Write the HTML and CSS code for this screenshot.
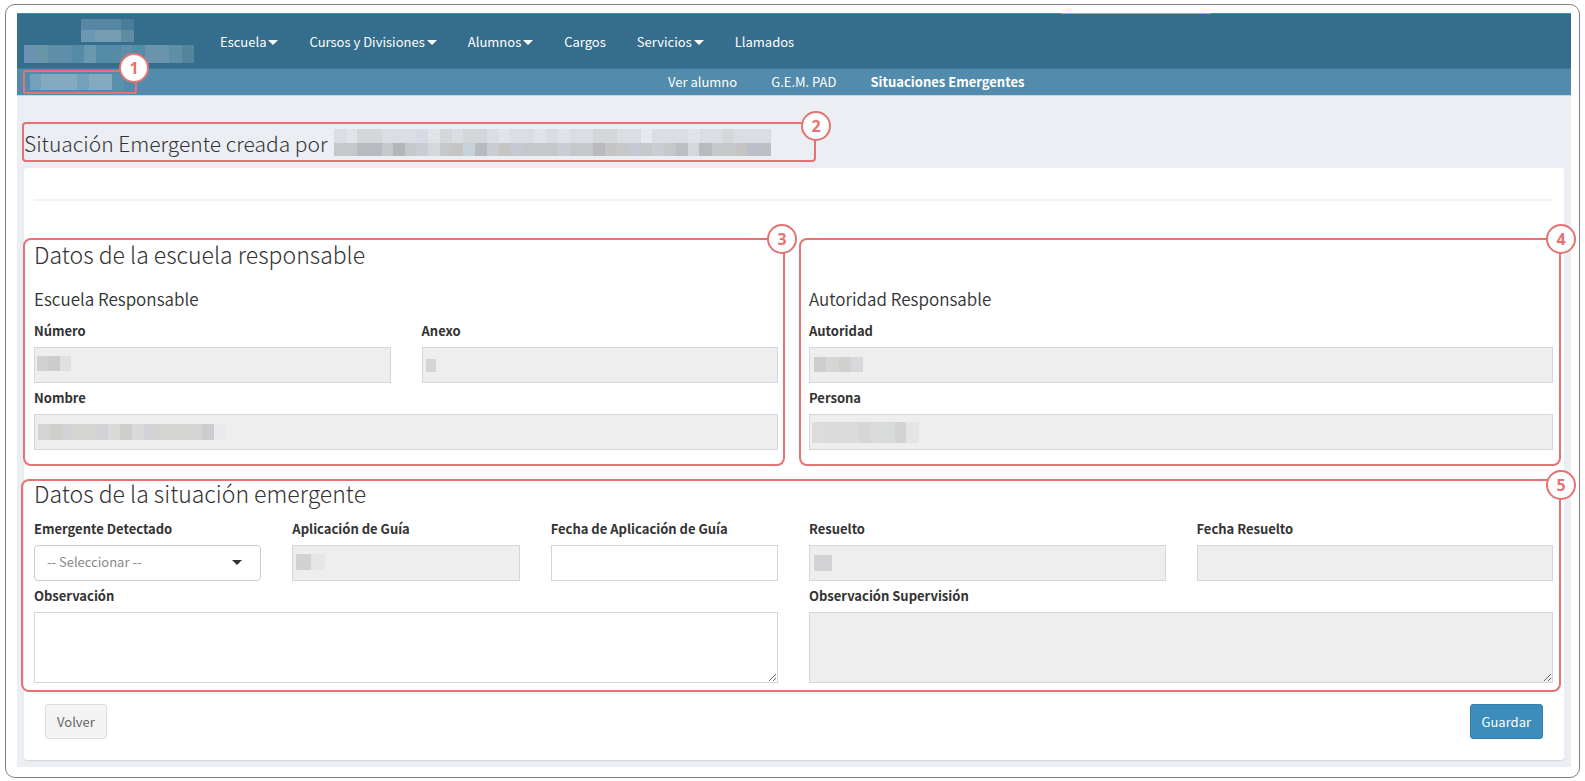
FILE: index.html
```html
<!DOCTYPE html>
<html lang="es">
  <head>
    <meta charset="utf-8">
    <title>Situaciones Emergentes</title>
    <link rel="stylesheet" href="styles.css">
  </head>

  <body>
    <div class="frame">
      <div class="app">
        <header class="topbar">
          <svg class="brand" width="170" height="44" viewBox="0 0 170 44" shape-rendering="crispEdges">
            <path fill="#5787a3" d="M57 0h40v11h-40z"/>
            <path fill="#4c7d98" d="M97 0h13v11h-13z"/>
            <path fill="#6a98b3" d="M57 11h14v12h-14z"/>
            <path fill="#769db2" d="M71 11h26v12h-26z"/>
            <path fill="#5f8ba3" d="M97 11h13v12h-13z"/>
            <path fill="#5f8fa8" d="M0 26h170v18h-170z"/>
            <path fill="#6b92b0" d="M0 26h12v18h-12z"/>
            <path fill="#6a94ac" d="M121 26h24v18h-24z"/>
            <path fill="#6796a7" d="M12 26h12v18h-12z"/>
            <path fill="#568ba7" d="M48 26h12v18h-12zM72 26h25v18h-25zM108 26h13v18h-13z"/>
            <path fill="#6a98ae" d="M60 26h12v18h-12z"/>
            <path fill="#53849a" d="M158 26h12v18h-12z"/>
          </svg>
          <nav class="main-nav">
            <a href="#">Escuela<span class="caret"></span></a>
            <a href="#">Cursos y Divisiones<span class="caret"></span></a>
            <a href="#">Alumnos<span class="caret"></span></a>
            <a href="#">Cargos</a>
            <a href="#">Servicios<span class="caret"></span></a>
            <a href="#">Llamados</a>
          </nav>
          <span class="progress"></span>
        </header>

        <div class="subbar">
          <div class="subbar-user">
            <svg width="94" height="16" viewBox="0 0 94 16" shape-rendering="crispEdges">
              <path fill="#73a1ba" d="M0 0h82v16h-82z"/>
              <path fill="#84aac0" d="M11 0h36v16h-36zM59 0h23v16h-23z"/>
              <path fill="#5a8fad" d="M82 0h12v16h-12z"/>
            </svg>
            <span class="callout callout-user"><b>1</b></span>
          </div>
          <nav class="sub-nav">
            <a href="#">Ver alumno</a>
            <a href="#">G.E.M. PAD</a>
            <a href="#" class="active">Situaciones Emergentes</a>
          </nav>
        </div>

        <main class="content">
          <div class="page-title">
            <h1>Situación Emergente creada por</h1>
            <svg width="437" height="27" viewBox="0 0 437 27" shape-rendering="crispEdges">
              <path fill="#dadee2" d="M0 0h437v14h-437z"/>
              <path fill="#e0e4e9" d="M12 0h11v14h-11zM94 0h12v14h-12zM165 0h11v14h-11zM200 0h12v14h-12zM224 0h12v14h-12zM354 0h12v14h-12z"/>
              <path fill="#d4d7da" d="M23 0h25v14h-25zM106 0h12v14h-12zM129 0h24v14h-24zM259 0h24v14h-24zM389 0h11v14h-11z"/>
              <path fill="#d8dae5" d="M82 0h12v14h-12z"/>
              <path fill="#e6eaee" d="M307 0h11v14h-11z"/>
              <path fill="#c5c7c9" d="M0 14h437v13h-437z"/>
              <path fill="#b8babf" d="M23 14h25v13h-25zM141 14h12v13h-12zM259 14h12v13h-12zM365 14h13v13h-13z"/>
              <path fill="#b2b6b8" d="M59 14h12v13h-12z"/>
              <path fill="#cbcdd4" d="M82 14h12v13h-12zM153 14h12v13h-12zM224 14h12v13h-12zM318 14h12v13h-12z"/>
              <path fill="#d4d8db" d="M94 14h12v13h-12zM354 14h11v13h-11z"/>
              <path fill="#c5c9d4" d="M177 14h12v13h-12zM295 14h12v13h-12z"/>
              <path fill="#c6d1da" d="M129 14h12v13h-12z"/>
              <path fill="#c7c5c3" d="M118 14h11v13h-11zM165 14h12v13h-12zM271 14h12v13h-12zM401 14h12v13h-12z"/>
              <path fill="#bbbfca" d="M413 14h12v13h-12z"/>
              <path fill="#bebfc4" d="M425 14h12v13h-12zM342 14h12v13h-12z"/>
            </svg>
            <span class="callout callout-title"><b>2</b></span>
          </div>

          <form class="panel">
            <hr>

            <section class="row">
              <div class="half">
                <h2>Datos de la escuela responsable</h2>
                <h3>Escuela Responsable</h3>
                <div class="fields">
                  <div class="field">
                    <label for="numero">Número</label>
                    <div class="control">
                      <input type="text" id="numero" readonly>
                      <svg class="blurred" shape-rendering="crispEdges">
                        <path fill="#d2d0d1" d="M3 9h11v15h-11z"/>
                        <path fill="#cbcecc" d="M14 9h12v15h-12z"/>
                        <path fill="#dfe0df" d="M26 9h11v15h-11z"/>
                      </svg>
                    </div>
                  </div>
                  <div class="field">
                    <label for="anexo">Anexo</label>
                    <div class="control">
                      <input type="text" id="anexo" readonly>
                      <svg class="blurred" shape-rendering="crispEdges">
                        <path fill="#d3d5d4" d="M4 12h10v13h-10z"/>
                      </svg>
                    </div>
                  </div>
                </div>
                <div class="fields">
                  <div class="field">
                    <label for="nombre">Nombre</label>
                    <div class="control">
                      <input type="text" id="nombre" readonly>
                      <svg class="blurred" shape-rendering="crispEdges">
                        <path fill="#d4d4d3" d="M4 10h176v16h-176z"/>
                        <path fill="#cfcecb" d="M16 10h12v16h-12zM86 10h12v16h-12z"/>
                        <path fill="#d2d3d6" d="M28 10h11v16h-11zM62 10h12v16h-12zM110 10h11v16h-11z"/>
                        <path fill="#dadada" d="M74 10h12v16h-12zM98 10h12v16h-12z"/>
                        <path fill="#cecccd" d="M168 10h12v16h-12z"/>
                        <path fill="#e9eaed" d="M180 10h12v16h-12z"/>
                      </svg>
                    </div>
                  </div>
                </div>
                <span class="callout callout-school"><b>3</b></span>
              </div>

              <div class="half">
                <h3>Autoridad Responsable</h3>
                <div class="fields">
                  <div class="field">
                    <label for="autoridad">Autoridad</label>
                    <div class="control">
                      <input type="text" id="autoridad" readonly>
                      <svg class="blurred" shape-rendering="crispEdges">
                        <path fill="#cecece" d="M5 10h12v15h-12z"/>
                        <path fill="#d6d6d3" d="M17 10h13v15h-13z"/>
                        <path fill="#d0d0d0" d="M30 10h12v15h-12z"/>
                        <path fill="#d8d9db" d="M42 10h12v15h-12z"/>
                      </svg>
                    </div>
                  </div>
                </div>
                <div class="fields">
                  <div class="field">
                    <label for="persona">Persona</label>
                    <div class="control">
                      <input type="text" id="persona" readonly>
                      <svg class="blurred" shape-rendering="crispEdges">
                        <path fill="#dbdbdb" d="M3 8h94v21h-94z"/>
                        <path fill="#dedbdc" d="M3 8h11v21h-11z"/>
                        <path fill="#d7d7d7" d="M50 8h12v21h-12z"/>
                        <path fill="#d7dbd9" d="M74 8h12v21h-12z"/>
                        <path fill="#d3d3d3" d="M86 8h11v21h-11z"/>
                        <path fill="#e5e5e5" d="M97 8h13v21h-13z"/>
                      </svg>
                    </div>
                  </div>
                </div>
                <span class="callout callout-authority"><b>4</b></span>
              </div>
            </section>

            <section class="situation">
              <h2>Datos de la situación emergente</h2>
              <div class="row">
                <div class="fields">
                  <div class="field">
                    <label for="emergente">Emergente Detectado</label>
                    <div class="control">
                      <select id="emergente">
                        <option>-- Seleccionar --</option>
                      </select>
                      <span class="caret select-caret"></span>
                    </div>
                  </div>
                  <div class="field">
                    <label for="aplicacion">Aplicación de Guía</label>
                    <div class="control">
                      <input type="text" id="aplicacion" readonly>
                      <svg class="blurred" shape-rendering="crispEdges">
                        <path fill="#d3d2d0" d="M4 9h15v16h-15z"/>
                        <path fill="#e6e6e6" d="M19 9h14v16h-14z"/>
                      </svg>
                    </div>
                  </div>
                  <div class="field">
                    <label for="fecha-aplicacion">Fecha de Aplicación de Guía</label>
                    <input type="text" id="fecha-aplicacion">
                  </div>
                </div>
                <div class="fields">
                  <div class="field">
                    <label for="resuelto">Resuelto</label>
                    <div class="control">
                      <input type="text" id="resuelto" readonly>
                      <svg class="blurred" shape-rendering="crispEdges">
                        <path fill="#d3d3d5" d="M5 10h18v16h-18z"/>
                      </svg>
                    </div>
                  </div>
                  <div class="field">
                    <label for="fecha-resuelto">Fecha Resuelto</label>
                    <input type="text" id="fecha-resuelto" readonly>
                  </div>
                </div>
              </div>
              <div class="row">
                <div class="field">
                  <label for="observacion">Observación</label>
                  <textarea id="observacion"></textarea>
                </div>
                <div class="field">
                  <label for="supervision">Observación Supervisión</label>
                  <textarea id="supervision" readonly></textarea>
                </div>
              </div>
              <span class="callout callout-situation"><b>5</b></span>
            </section>

            <footer class="actions">
              <button type="button" class="btn">Volver</button>
              <button type="submit" class="btn btn-primary">Guardar</button>
            </footer>
          </form>
        </main>
      </div>
    </div>
  </body>
</html>
```
FILE: styles.css
```css
* {
  box-sizing: border-box;
}

body {
  margin: 0;
  padding: 4px 5px 3px;
  background: #fff;
  color: #333;
  font-family: 'Noto Sans CJK SC', 'Open Sans', sans-serif;
  font-size: 13px;
  line-height: 20px;
}

a {
  color: inherit;
  text-decoration: none;
}

h1,
h2,
h3 {
  margin: 0;
  font-weight: 300;
}

.frame {
  padding: 8px 8px 10px 11px;
  border: 1px solid #808080;
  border-radius: 10px;
}

.app {
  background: #ebeef3;
}

/* Navigation */
.topbar {
  position: relative;
  display: flex;
  align-items: center;
  height: 56px;
  padding: 0 7px;
  background: #356e8d;
  border-top: 1px solid #3c8dbc;
  border-bottom: 1px solid #437b9a;
}

.main-nav {
  display: flex;
  gap: 31px;
  margin-left: 26px;
  padding-top: 2px;
  color: #fff;
}

.main-nav a {
  display: flex;
  align-items: center;
  gap: 2px;
}

.caret {
  border: 5px solid transparent;
  border-top-color: currentColor;
  border-bottom: 0;
}

.progress {
  position: absolute;
  top: -1px;
  left: 67.2%;
  width: 150px;
  height: 1px;
  background: #e5a32e;
}

.subbar {
  display: flex;
  align-items: center;
  height: 27px;
  background: #528bab;
  border-bottom: 1px solid #c3d6e2;
  color: #fff;
}

.subbar-user {
  position: relative;
  display: flex;
  width: 114px;
  margin-left: 6px;
  padding: 4px 7px;
}

.sub-nav {
  display: flex;
  gap: 34px;
  margin-left: 531px;
}

.sub-nav .active {
  font-weight: 700;
}

/* Page */
.content {
  padding: 26px 7px 7px;
}

.page-title {
  position: relative;
  display: flex;
  align-items: center;
  gap: 6px;
  width: 792px;
  height: 40px;
  margin-bottom: 6px;
}

h1 {
  padding-top: 2px;
  font-size: 21px;
  line-height: 26px;
}

h2 {
  font-size: 23px;
  line-height: 26px;
}

h3 {
  font-size: 17px;
  font-weight: 350;
  line-height: 20px;
}

.panel {
  padding: 10px 11px 21px 10px;
  background: #fff;
  border-radius: 3px;
  box-shadow: 0 1px 1px rgba(0, 0, 0, 0.1);
}

hr {
  height: 2px;
  margin: 21px 0 40px;
  border: 0;
  background: #f3f3f3;
}

.row {
  display: grid;
  grid-template-columns: 1fr 1fr;
  gap: 31px;
}

.half {
  position: relative;
  display: flex;
  flex-direction: column;
  justify-content: flex-end;
}

.half h2 {
  margin-bottom: 22px;
}

.half h3 {
  margin-bottom: 12px;
}

.fields {
  display: flex;
  gap: 31px;
}

.field {
  flex: 1;
  min-width: 0;
}

.half .fields + .fields,
.row + .row {
  margin-top: 5px;
}

label {
  display: block;
  margin-bottom: 6px;
  font-weight: 700;
}

input,
select,
textarea {
  display: block;
  width: 100%;
  height: 36px;
  padding: 6px 12px;
  border: 1px solid #d2d6de;
  border-radius: 0;
  background: #fff;
  color: #555;
  font: inherit;
}

textarea {
  height: 71px;
}

input:read-only,
textarea:read-only {
  background: #eee;
}

select {
  appearance: none;
  padding: 5px 12px 7px;
  border-color: #ccc;
  border-radius: 4px;
  color: #888;
}

.control {
  position: relative;
}

.select-caret {
  position: absolute;
  top: 15px;
  right: 19px;
  color: #333;
}

.blurred {
  position: absolute;
  top: 0;
  left: 0;
  width: 100%;
  height: 100%;
  pointer-events: none;
}

.situation {
  position: relative;
  margin-top: 30px;
}

.situation h2 {
  margin-bottom: 13px;
}

.actions {
  display: flex;
  justify-content: space-between;
  margin-top: 10px;
  padding: 10px 10px 0 11px;
  border-top: 1px solid #f4f4f4;
}

.btn {
  height: 35px;
  padding: 0 11px;
  border: 1px solid #ddd;
  border-radius: 3px;
  background: #f4f4f4;
  color: #666;
  font: inherit;
  cursor: pointer;
}

.btn-primary {
  border-color: #367fa9;
  background: #3c8dbc;
  color: #fff;
}

/* Numbered callouts over the form */
.callout {
  position: absolute;
  border: 2px solid #e57373;
  border-radius: 8px;
  pointer-events: none;
}

.callout b {
  position: absolute;
  top: -16px;
  right: -17px;
  width: 30px;
  height: 30px;
  border: 2px solid #e57373;
  border-radius: 50%;
  background: #fff;
  color: #e57373;
  font: 700 16px/26px 'Open Sans', sans-serif;
  text-align: center;
}

.callout-user {
  inset: 0;
  border-radius: 2px;
}

.callout-user b {
  top: -19px;
  right: -14px;
}

.callout-title {
  inset: 0 0 0 -2px;
  border-radius: 4px;
}

.callout-title b {
  top: -13px;
}

.callout-school {
  inset: -3px -7px -16px -11px;
}

.callout-school b {
  right: -14px;
}

.callout-authority {
  inset: -3px -8px -16px -10px;
}

.callout-situation {
  inset: -1px -8px -9px -13px;
}

.callout-situation b {
  top: -11px;
}
```
